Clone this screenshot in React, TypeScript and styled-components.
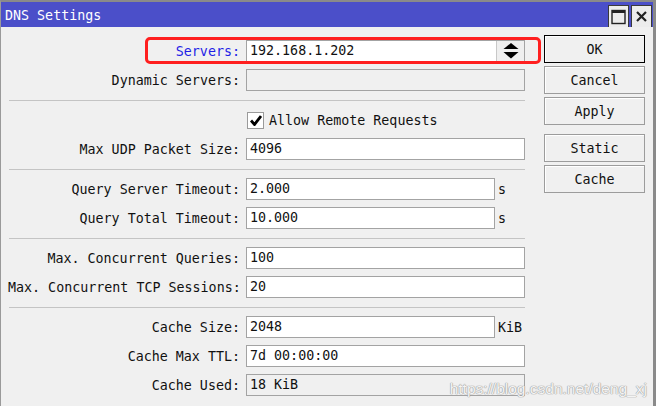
import { FC } from "react";
import styled, { createGlobalStyle, css } from "styled-components";

const GlobalStyle = createGlobalStyle`
	html, body {
		margin: 0;
		padding: 0;
		background: #f0f0f0;
	}
	body {
		font-family: "DejaVu Sans Mono", "Liberation Mono", monospace;
		font-size: 13.33px;
		color: #111;
	}
`

type Field =
	| { kind: "text"; label: string; value?: string; unit?: string; readOnly?: boolean; accent?: boolean; spinner?: boolean }
	| { kind: "check"; text: string; checked: boolean }

const sections: Field[][] = [
	[
		{ kind: "text", label: "Servers:", value: "192.168.1.202", accent: true, spinner: true },
		{ kind: "text", label: "Dynamic Servers:", readOnly: true },
	],
	[
		{ kind: "check", text: "Allow Remote Requests", checked: true },
		{ kind: "text", label: "Max UDP Packet Size:", value: "4096" },
	],
	[
		{ kind: "text", label: "Query Server Timeout:", value: "2.000", unit: "s" },
		{ kind: "text", label: "Query Total Timeout:", value: "10.000", unit: "s" },
	],
	[
		{ kind: "text", label: "Max. Concurrent Queries:", value: "100" },
		{ kind: "text", label: "Max. Concurrent TCP Sessions:", value: "20" },
	],
	[
		{ kind: "text", label: "Cache Size:", value: "2048", unit: "KiB" },
		{ kind: "text", label: "Cache Max TTL:", value: "7d 00:00:00" },
		{ kind: "text", label: "Cache Used:", value: "18 KiB", readOnly: true },
	],
]

const buttons = [
	{ title: "OK", isDefault: true },
	{ title: "Cancel" },
	{ title: "Apply" },
	{ title: "Static", isSpaced: true },
	{ title: "Cache" },
]

const FieldRow: FC<{ field: Field }> = ({ field }) => {
	if (field.kind === "check") {
		return (
			<SRow>
				<span />
				<SCheckLine>
					<SCheckBox>
						{field.checked && (
							<svg width="12" height="11" viewBox="0 0 12 11">
								<path d="M1 5.5 L4.5 9.5 L11 1" fill="none" stroke="#000" strokeWidth="2.8" />
							</svg>
						)}
					</SCheckBox>
					{field.text}
				</SCheckLine>
			</SRow>
		)
	}

	return (
		<SRow>
			<SLabel isAccent={field.accent}>{field.label}</SLabel>
			<SFieldCell>
				<SInput isReadOnly={field.readOnly} hasUnit={!!field.unit} hasSpinner={field.spinner}>
					{field.value}
				</SInput>
				{field.spinner && (
					<SSpinner>
						<svg width="16" height="16" viewBox="0 0 16 16">
							<path d="M8 0 L15.5 6 L0.5 6 Z" fill="#000" />
							<path d="M0.5 9 L15.5 9 L8 15.5 Z" fill="#000" />
						</svg>
					</SSpinner>
				)}
				{field.unit && <SUnit>{field.unit}</SUnit>}
			</SFieldCell>
		</SRow>
	)
}

export default function App() {
	return (
		<>
			<GlobalStyle />
			<SWindow>
				<STitleBar>
					<STitle>DNS Settings</STitle>
					<STitleButtons>
						<STitleButton>
							<svg width="15" height="16" viewBox="0 0 15 16">
								<rect x="1" y="1.5" width="13" height="13" fill="none" stroke="#222" strokeWidth="1.4" />
								<rect x="1" y="1" width="13" height="3" fill="#222" />
							</svg>
						</STitleButton>
						<STitleButton>
							<svg width="11" height="11" viewBox="0 0 11 11">
								<path d="M1 1 L10 10 M10 1 L1 10" stroke="#222" strokeWidth="2.2" />
							</svg>
						</STitleButton>
					</STitleButtons>
				</STitleBar>
				<SBody>
					<SForm>
						{sections.map((section, idx) => (
							<SSection key={'section-' + idx} hasLine={idx > 0}>
								{section.map((field, fieldIdx) => (
									<FieldRow key={'field-' + fieldIdx} field={field} />
								))}
							</SSection>
						))}
					</SForm>
					<SButtons>
						{buttons.map((button) => (
							<SButton key={button.title} isDefault={button.isDefault} isSpaced={button.isSpaced}>
								{button.title}
							</SButton>
						))}
					</SButtons>
				</SBody>
				<SHighlight />
				<SWatermark>https://blog.csdn.net/deng_xj</SWatermark>
			</SWindow>
		</>
	)
}

const SWindow = styled.div`
	position: relative;
	width: 656px;
	height: 406px;
	box-sizing: border-box;
	overflow: hidden;
	background: #f0f0f0;
	border-top: 2px solid #8a8a8a;
	border-left: 1px solid #9a9a9a;
	border-right: 3px solid #8a8a8a;
`

const STitleBar = styled.div`
	display: flex;
	align-items: flex-end;
	justify-content: space-between;
	height: 25px;
	padding-left: 4px;
	padding-right: 1px;
	background: #4b4fc9;
`

const STitle = styled.div`
	align-self: center;
	color: #fff;
	font-size: 13.33px;
	padding-top: 1px;
`

const STitleButtons = styled.div`
	display: flex;
	gap: 2px;
`

const STitleButton = styled.div`
	display: flex;
	align-items: center;
	justify-content: center;
	width: 21px;
	height: 22px;
	box-sizing: border-box;
	background: #ececec;
	border: 1px solid #3a3a3a;
	border-bottom: none;
`

const SBody = styled.div`
	display: flex;
	gap: 19px;
	padding: 8px 8px 0 7px;
`

const SForm = styled.div`
	display: flex;
	flex-direction: column;
	padding-top: 5px;
`

const SSection = styled.div<{ hasLine?: boolean }>`
	display: flex;
	flex-direction: column;
	gap: 7px;
	${({ hasLine }) => hasLine && css`
		margin-top: 9px;
		margin-left: 1px;
		padding-top: 8px;
		border-top: 1px solid #c4c4c4;
		& > * { margin-left: -1px; }
	`}
`

const SRow = styled.div`
	display: grid;
	grid-template-columns: 232px 279px;
	column-gap: 6px;
	align-items: center;
	height: 22px;
`

const SLabel = styled.div<{ isAccent?: boolean }>`
	text-align: right;
	white-space: nowrap;
	color: ${({ isAccent }) => isAccent ? '#1f1fe6' : '#111'};
`

const SFieldCell = styled.div`
	display: flex;
	align-items: center;
	height: 22px;
`

const SInput = styled.div<{ isReadOnly?: boolean; hasUnit?: boolean; hasSpinner?: boolean }>`
	box-sizing: border-box;
	width: ${({ hasUnit, hasSpinner }) => hasUnit ? '249px' : hasSpinner ? '251px' : '279px'};
	height: 22px;
	line-height: 20px;
	padding-left: 3px;
	border: 1px solid #a3a3a3;
	background: ${({ isReadOnly }) => isReadOnly ? '#f0f0f0' : '#fff'};
	white-space: nowrap;
	${({ hasSpinner }) => hasSpinner && css`
		border-right: none;
		box-shadow: inset -1px 0 0 #c8c8c8;
	`}
`

const SSpinner = styled.div`
	display: flex;
	align-items: center;
	justify-content: center;
	box-sizing: border-box;
	width: 28px;
	height: 22px;
	background: #efefef;
	border: 1px solid #a3a3a3;
	border-left: none;
`

const SUnit = styled.span`
	margin-left: 3px;
	white-space: nowrap;
`

const SCheckLine = styled.label`
	display: flex;
	align-items: center;
	gap: 5px;
	padding-left: 1px;
`

const SCheckBox = styled.span`
	display: flex;
	align-items: center;
	justify-content: center;
	box-sizing: border-box;
	width: 17px;
	height: 17px;
	background: #fff;
	border: 1px solid #9a9a9a;
`

const SButtons = styled.div`
	display: flex;
	flex-direction: column;
	gap: 3px;
	width: 101px;
`

const SButton = styled.div<{ isDefault?: boolean; isSpaced?: boolean }>`
	display: flex;
	align-items: center;
	justify-content: center;
	box-sizing: border-box;
	height: 28px;
	background: #f0f0f0;
	border: 1px solid ${({ isDefault }) => isDefault ? '#000' : '#9c9c9c'};
	box-shadow: inset 1px 1px 0 #fff;
	${({ isSpaced }) => isSpaced && css`
		margin-top: 6px;
	`}
`

const SHighlight = styled.div`
	position: absolute;
	left: 144px;
	top: 35px;
	width: 396px;
	height: 27px;
	box-sizing: border-box;
	border: 3px solid #ff1f1f;
	border-radius: 5px;
	pointer-events: none;
`

const SWatermark = styled.div`
	position: absolute;
	right: 6px;
	bottom: 8px;
	font-family: "Liberation Sans", Arial, sans-serif;
	font-size: 15.5px;
	color: #f4f4f4;
	text-shadow: 0 0 1px #a0a0a0, 0 0 1px #a0a0a0, 0 0 1px #a0a0a0;
	pointer-events: none;
`
